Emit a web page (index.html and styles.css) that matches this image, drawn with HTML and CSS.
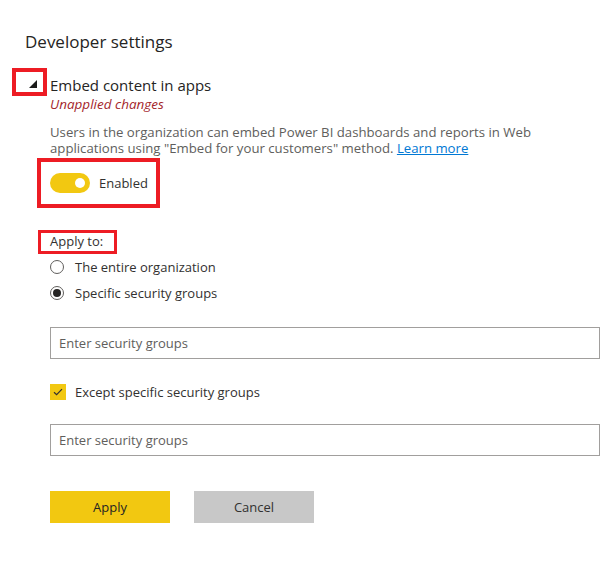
FILE: index.html
```html
<!DOCTYPE html>
<html lang="en">
<head>
<meta charset="utf-8">
<title>Developer settings</title>
<link rel="stylesheet" href="styles.css">
</head>
<body>
<div class="page">
  <h1 class="title">Developer settings</h1>
  <div class="setting-head">
    <span class="mark mark-caret">
      <svg width="8" height="8" viewBox="0 0 8 8"><polygon points="8,0 8,8 0,8" fill="#1b1a19"/></svg>
    </span>
    <span class="setting-name">Embed content in apps</span>
  </div>
  <div class="content">
    <div class="unapplied">Unapplied changes</div>
    <p class="desc">Users in the organization can embed Power BI dashboards and reports in Web applications using "Embed for your customers" method. <a href="#" class="link">Learn more</a></p>
    <div class="mark mark-toggle">
      <span class="toggle"><span class="knob"></span></span>
      <span class="toggle-label">Enabled</span>
    </div>
    <div class="apply-wrap"><span class="mark mark-apply">Apply to:</span></div>
    <div class="radio-row"><span class="radio"></span><span>The entire organization</span></div>
    <div class="radio-row"><span class="radio checked"></span><span>Specific security groups</span></div>
    <div class="input">Enter security groups</div>
    <div class="check-row">
      <span class="checkbox"><svg width="10" height="8" viewBox="0 0 10 8"><polyline points="1,4.2 3.6,6.6 9,1.2" fill="none" stroke="#323130" stroke-width="1.2"/></svg></span>
      <span>Except specific security groups</span>
    </div>
    <div class="input input-2">Enter security groups</div>
    <div class="buttons">
      <button class="btn btn-primary">Apply</button>
      <button class="btn btn-secondary">Cancel</button>
    </div>
  </div>
</div>
</body>
</html>
```
FILE: styles.css
```css
* { box-sizing: border-box; }
html, body { margin: 0; background: #ffffff; }
body {
  font-family: "Segoe UI", "Open Sans", "Noto Sans", sans-serif;
  color: #252423;
}
.page {
  padding: 30px 5px 0 12px;
  display: flex;
  flex-direction: column;
}
.title {
  margin: 0 0 0 13px;
  font-size: 17px;
  font-weight: 400;
  line-height: 24px;
  color: #252423;
}
.setting-head {
  margin-top: 14px;
  display: flex;
  align-items: flex-start;
}
.mark { border: 4px solid #ed1c24; }
.mark-caret {
  width: 35px;
  height: 28px;
  display: flex;
  align-items: center;
  justify-content: flex-end;
  padding-right: 6px;
  padding-top: 3px;
}
.setting-name {
  margin: 6px 0 0 3px;
  font-size: 15px;
  line-height: 22px;
}
.content {
  margin-left: 38px;
  display: flex;
  flex-direction: column;
  align-items: flex-start;
}
.unapplied {
  font-size: 13.5px;
  line-height: 16px;
  font-style: italic;
  color: #a4262c;
}
.desc {
  margin: 12px 0 0;
  font-size: 13.2px;
  line-height: 16px;
  color: #605e5c;
}
.link {
  display: inline-block;
  line-height: 16px;
  color: #0078d4;
  text-decoration: underline;
}
.mark-toggle {
  margin: 2px 0 0 -13px;
  width: 123px;
  height: 50px;
  display: flex;
  align-items: center;
  padding-left: 9px;
  gap: 9px;
}
.toggle {
  width: 40px;
  height: 20px;
  border-radius: 10px;
  background: #f2c811;
  display: flex;
  align-items: center;
  justify-content: flex-end;
  padding-right: 5px;
}
.knob {
  width: 10px;
  height: 10px;
  border-radius: 50%;
  background: #ffffff;
}
.toggle-label { font-size: 13px; color: #323130; }
.apply-wrap { margin: 22px 0 0 -12px; display: flex; }
.mark-apply {
  border-width: 3px;
  width: 79px;
  height: 24px;
  padding-left: 9px;
  font-size: 13px;
  line-height: 17px;
  color: #323130;
}
.radio-row, .check-row {
  display: flex;
  align-items: center;
  font-size: 13px;
  color: #323130;
}
.radio-row { height: 26px; gap: 11px; }
.radio {
  width: 14px;
  height: 14px;
  border: 1px solid #605e5c;
  border-radius: 50%;
  display: flex;
  align-items: center;
  justify-content: center;
}
.radio.checked::after {
  content: "";
  width: 8px;
  height: 8px;
  border-radius: 50%;
  background: #252423;
}
.input {
  align-self: stretch;
  margin-top: 21px;
  height: 32px;
  border: 1px solid #a19f9d;
  padding-left: 8px;
  display: flex;
  align-items: center;
  font-size: 13px;
  color: #605e5c;
}
.input-2 { margin-top: 24px; }
.check-row { margin-top: 25px; gap: 9px; height: 16px; }
.checkbox {
  width: 16px;
  height: 16px;
  background: #f2c811;
  display: flex;
  align-items: center;
  justify-content: center;
}
.buttons { margin-top: 35px; display: flex; gap: 24px; }
.btn {
  width: 120px;
  height: 32px;
  border: 0;
  font-family: inherit;
  font-size: 13px;
  color: #252423;
  padding: 0;
}
.btn-primary { background: #f2c811; }
.btn-secondary { background: #c8c8c8; color: #323130; }
```
